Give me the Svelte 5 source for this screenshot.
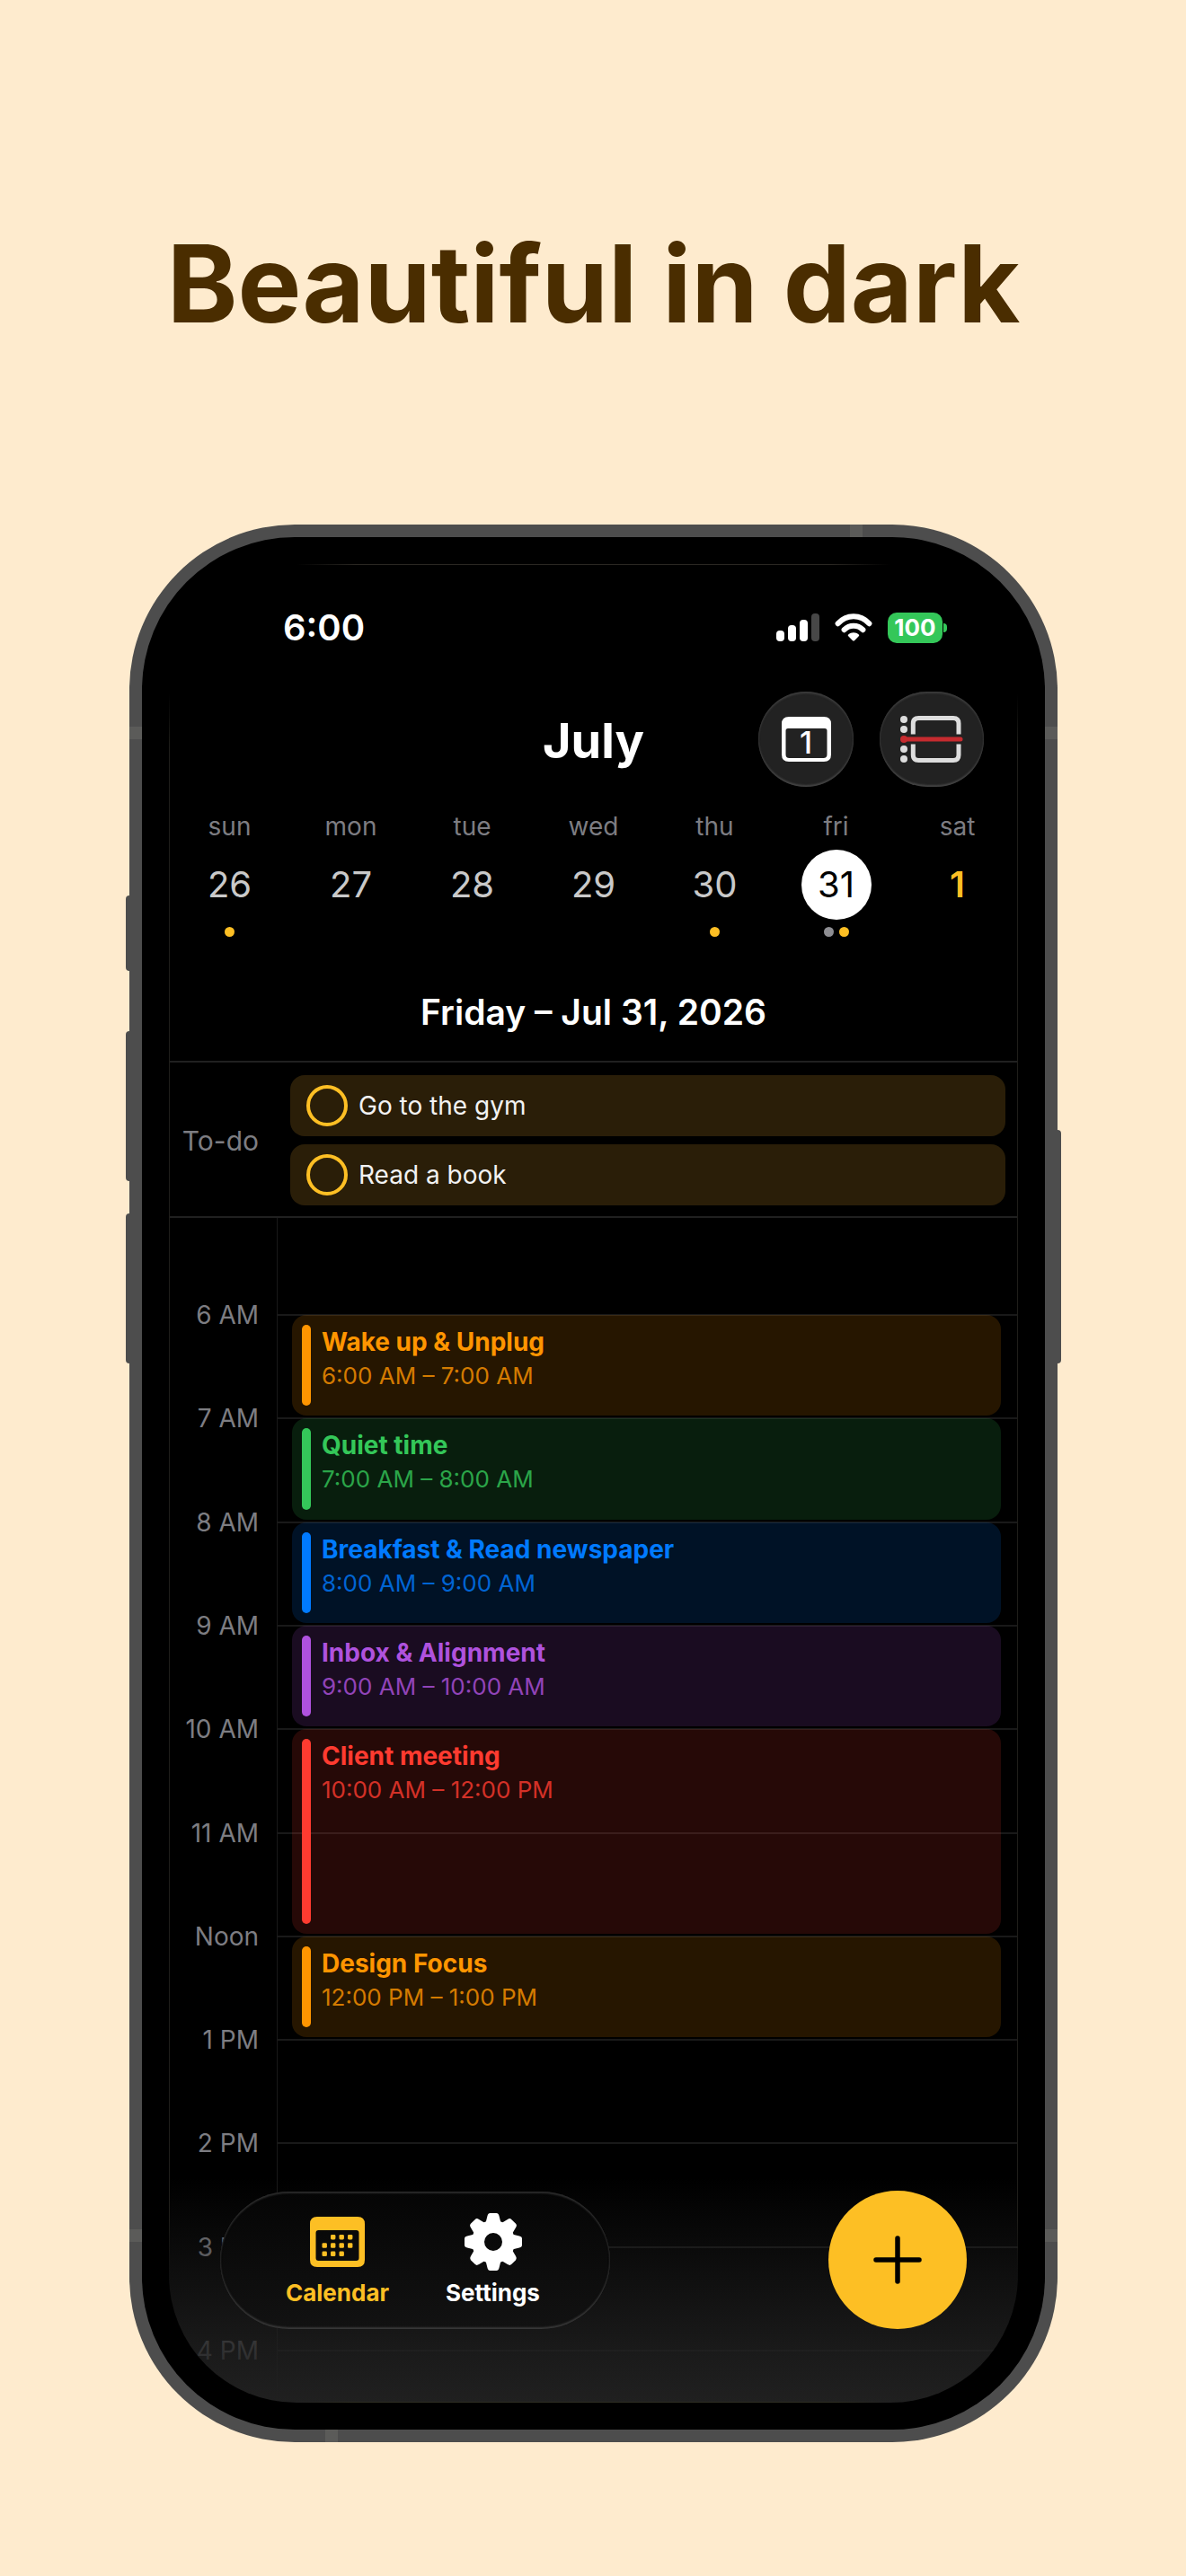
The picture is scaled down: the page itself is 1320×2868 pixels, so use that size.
<script lang="ts">
  type Day = { name: string; date: number; dots?: string[]; selected?: boolean; accent?: boolean };
  type CalendarEvent = { title: string; time: string; start: number; hours: number; color: string };

  const DAYS: Day[] = [
    { name: "sun", date: 26, dots: ["#fdbf24"] },
    { name: "mon", date: 27 },
    { name: "tue", date: 28 },
    { name: "wed", date: 29 },
    { name: "thu", date: 30, dots: ["#fdbf24"] },
    { name: "fri", date: 31, dots: ["#8e8e93", "#fdbf24"], selected: true },
    { name: "sat", date: 1, accent: true },
  ];

  const HOURS = [
    "6 AM",
    "7 AM",
    "8 AM",
    "9 AM",
    "10 AM",
    "11 AM",
    "Noon",
    "1 PM",
    "2 PM",
    "3 PM",
    "4 PM",
  ];

  // start is the hour of the day, the timeline opens at 6
  const EVENTS: CalendarEvent[] = [
    { title: "Wake up & Unplug", time: "6:00 AM – 7:00 AM", start: 6, hours: 1, color: "#ff9500" },
    { title: "Quiet time", time: "7:00 AM – 8:00 AM", start: 7, hours: 1, color: "#34c759" },
    { title: "Breakfast & Read newspaper", time: "8:00 AM – 9:00 AM", start: 8, hours: 1, color: "#007aff" },
    { title: "Inbox & Alignment", time: "9:00 AM – 10:00 AM", start: 9, hours: 1, color: "#af52de" },
    { title: "Client meeting", time: "10:00 AM – 12:00 PM", start: 10, hours: 2, color: "#ff3b30" },
    { title: "Design Focus", time: "12:00 PM – 1:00 PM", start: 12, hours: 1, color: "#ff9500" },
  ];

  const GEAR_TEETH = [0, 45, 90, 135, 180, 225, 270, 315];

  // [column, row] of every filled day in the tab icon
  const ICON_DAYS = [
    [1, 0], [2, 0], [3, 0],
    [0, 1], [1, 1], [2, 1], [3, 1],
    [0, 2], [1, 2], [2, 2],
  ];

  let todos = $state([
    { id: "gym", text: "Go to the gym", done: false },
    { id: "book", text: "Read a book", done: false },
  ]);
</script>

<main class="page">
  <h1 class="headline">Beautiful in dark</h1>

  <div class="phone">
    <span class="key key-action"></span>
    <span class="key key-up"></span>
    <span class="key key-down"></span>
    <span class="key key-power"></span>
    <span class="band band-top"></span>
    <span class="band band-bottom"></span>
    <span class="band band-side band-upper"></span>
    <span class="band band-side band-lower"></span>

    <div class="bezel">
      <div class="screen">
        <div class="status">
          <span class="clock">6:00</span>
          <div class="status-icons">
            <svg width="48" height="31" viewBox="0 0 48 31" aria-hidden="true">
              <rect x="0" y="19" width="9" height="12" rx="4" fill="#fff" />
              <rect x="13" y="13" width="9" height="18" rx="4" fill="#fff" />
              <rect x="26" y="7" width="9" height="24" rx="4" fill="#fff" />
              <rect x="39" y="0" width="9" height="31" rx="4" fill="#474747" />
            </svg>
            <svg width="42" height="31" viewBox="0 0 42 31" aria-hidden="true">
              <g fill="none" stroke="#fff" stroke-width="6" stroke-linecap="round">
                <path d="M3.6 11.2C13.3 0.6 28.7 0.6 38.4 11.2" />
                <path d="M10.6 18.2C16.5 12.4 25.5 12.4 31.4 18.2" />
              </g>
              <path
                d="M15.2 23.4C18.4 20.4 23.6 20.4 26.8 23.4C27.4 24 27.4 24.6 26.8 25.2L22.2 29.9C21.4 30.7 20.6 30.7 19.8 29.9L15.2 25.2C14.6 24.6 14.6 24 15.2 23.4Z"
                fill="#fff"
              />
            </svg>
            <div class="battery"><span>100</span></div>
          </div>
        </div>

        <header class="topbar">
          <h2 class="month">July</h2>
          <div class="actions">
            <button class="round-btn" aria-label="Today">
              <svg width="55" height="50" viewBox="0 0 55 50" aria-hidden="true">
                <path
                  fill="#fff"
                  fill-rule="evenodd"
                  d="M8 0H47Q55 0 55 8V42Q55 50 47 50H8Q0 50 0 42V8Q0 0 8 0ZM7 13Q4.500 13 4.500 15.500V42Q4.500 46 8.500 46H46.500Q50.500 46 50.500 42V15.500Q50.500 13 48 13Z"
                />
                <text class="icon-day" x="27" y="41" text-anchor="middle">1</text>
              </svg>
            </button>
            <button class="round-btn wide" aria-label="Jump to now">
              <svg width="70" height="52" viewBox="0 0 70 52" aria-hidden="true">
                <g fill="#ddd">
                  <circle cx="4" cy="4" r="4" />
                  <circle cx="4" cy="15" r="4" />
                  <circle cx="4" cy="37" r="4" />
                  <circle cx="4" cy="48" r="4" />
                </g>
                <g fill="none" stroke="#ddd" stroke-width="5">
                  <path d="M14.300 20.500V8.500Q14.300 2.500 20.300 2.500H59Q65 2.500 65 8.500V20.500" />
                  <path d="M14.300 31.500V43.500Q14.300 49.500 20.300 49.500H59Q65 49.500 65 43.500V31.500" />
                </g>
                <path d="M4 26H67" stroke="#c62b2f" stroke-width="5" stroke-linecap="round" />
                <circle cx="4" cy="26" r="4" fill="#c62b2f" />
              </svg>
            </button>
          </div>
        </header>

        <div class="week">
          {#each DAYS as day (day.name)}
            <button class="day" class:selected={day.selected} class:accent={day.accent}>
              <span class="day-name">{day.name}</span>
              <span class="day-date">{day.date}</span>
              <span class="day-dots">
                {#each day.dots ?? [] as dot}
                  <i style:background={dot}></i>
                {/each}
              </span>
            </button>
          {/each}
        </div>

        <h3 class="date-title">Friday – Jul 31, 2026</h3>

        <section class="todo">
          <span class="todo-label">To-do</span>
          <div class="todo-list">
            {#each todos as todo (todo.id)}
              <label class="todo-item" for={todo.id}>
                <input id={todo.id} type="checkbox" bind:checked={todo.done} />
                <span>{todo.text}</span>
              </label>
            {/each}
          </div>
        </section>

        <section class="timeline">
          <div class="slot first" style:grid-row={1}></div>
          {#each HOURS as hour, i (hour)}
            <span class="hour" style:grid-row={i + 2}>{hour}</span>
            <div class="slot" style:grid-row={i + 2}></div>
          {/each}
          {#each EVENTS as event (event.title)}
            <article
              class="event"
              style:--color={event.color}
              style:grid-row="{event.start - 4} / span {event.hours}"
            >
              <span class="event-bar"></span>
              <div class="event-text">
                <h4>{event.title}</h4>
                <p>{event.time}</p>
              </div>
            </article>
          {/each}
        </section>

        <div class="fade"></div>

        <div class="bottom">
          <nav class="tabs">
            <a class="tab active" href="#calendar">
              <svg width="61" height="64" viewBox="0 -4 61 64" aria-hidden="true">
                <path
                  fill="currentColor"
                  fill-rule="evenodd"
                  d="M8 0H53Q61 0 61 8V48Q61 56 53 56H8Q0 56 0 48V8Q0 0 8 0ZM9.500 15Q6.500 15 6.500 18V46Q6.500 49 9.500 49H51.500Q54.500 49 54.500 46V18Q54.500 15 51.500 15Z"
                />
                {#each ICON_DAYS as [col, row]}
                  <rect
                    x={13.5 + col * 9.5}
                    y={20 + row * 9.3}
                    width="5.400"
                    height="5.400"
                    rx="1.300"
                    fill="currentColor"
                  />
                {/each}
              </svg>
              <span>Calendar</span>
            </a>
            <a class="tab" href="#settings">
              <svg width="66" height="64" viewBox="-33 -32 66 64" aria-hidden="true">
                <path
                  fill="currentColor"
                  fill-rule="evenodd"
                  d="M-24 0A24 24 0 1 1 24 0A24 24 0 1 1 -24 0ZM-10 0A10 10 0 1 0 10 0A10 10 0 1 0 -10 0Z"
                />
                {#each GEAR_TEETH as angle}
                  <path
                    fill="currentColor"
                    transform="rotate({angle})"
                    d="M-8.500 -21L-6.500 -29Q-5.800 -32 -3.500 -32H3.500Q5.800 -32 6.500 -29L8.500 -21Z"
                  />
                {/each}
              </svg>
              <span>Settings</span>
            </a>
          </nav>
          <button class="fab" aria-label="Add event">
            <svg width="54" height="54" viewBox="0 0 54 54" aria-hidden="true">
              <path d="M27 3V51M3 27H51" stroke="#000" stroke-width="5.500" stroke-linecap="round" />
            </svg>
          </button>
        </div>
      </div>
    </div>
  </div>
</main>

<style>
  :global(body) {
    background: #feebce;
  }

  .page {
    box-sizing: border-box;
    min-height: 100vh;
    padding: 236px 143px 150px 144px;
    background: #feebce;
    font-family: Inter, "Liberation Sans", sans-serif;
  }

  h1,
  h2,
  h3,
  h4,
  p {
    margin: 0;
  }

  button {
    padding: 0;
    border: 0;
    background: none;
    font: inherit;
    color: inherit;
  }

  svg {
    display: block;
  }

  .headline {
    margin-bottom: 188px;
    font-size: 119px;
    line-height: 160px;
    font-weight: 700;
    text-align: center;
    white-space: nowrap;
    color: #4a2d00;
  }

  .phone {
    position: relative;
    padding: 14px;
    border-radius: 184px;
    background: #4d4d4d;
  }

  .key {
    position: absolute;
    left: -4px;
    width: 8px;
    border-radius: 4px 0 0 4px;
    background: #4d4d4d;
  }

  .key-action {
    top: 413px;
    height: 84px;
  }

  .key-up {
    top: 564px;
    height: 167px;
  }

  .key-down {
    top: 767px;
    height: 167px;
  }

  .key-power {
    top: 674px;
    left: auto;
    right: -4px;
    height: 260px;
    border-radius: 0 4px 4px 0;
  }

  .band {
    position: absolute;
    width: 14px;
    height: 14px;
    background: #5b5b59;
  }

  .band-top {
    top: 0;
    right: 217px;
  }

  .band-bottom {
    bottom: 0;
    left: 218px;
  }

  .band-side {
    left: 0;
    width: 100%;
  }

  .band-upper {
    top: 225px;
  }

  .band-lower {
    bottom: 223px;
  }

  .bezel {
    position: relative;
    padding: 30px;
    border-radius: 170px;
    background: #000;
  }

  .screen {
    position: relative;
    overflow: hidden;
    border-radius: 142px;
    background: #000;
    color: #fff;
  }

  .screen::after {
    content: "";
    position: absolute;
    inset: 0;
    pointer-events: none;
    background:
      linear-gradient(90deg, transparent 15%, #2a2722 22%, #2a2722 78%, transparent 85%) top / 100% 1px no-repeat,
      linear-gradient(90deg, transparent 15%, #2e2e22 22%, #2e2e22 78%, transparent 85%) bottom / 100% 1px no-repeat,
      linear-gradient(transparent 7%, #1f1e1a 10%, #1f1e1a 90%, transparent 93%) left / 1px 100% no-repeat,
      linear-gradient(transparent 7%, #1f1e1a 10%, #1f1e1a 90%, transparent 93%) right / 1px 100% no-repeat;
  }

  .status {
    display: flex;
    align-items: center;
    justify-content: space-between;
    height: 141px;
    padding: 0 78px 0 127px;
  }

  .clock {
    font-size: 40px;
    font-weight: 600;
  }

  .status-icons {
    display: flex;
    align-items: center;
    gap: 17px;
  }

  .battery {
    position: relative;
    display: flex;
    align-items: center;
    justify-content: center;
    width: 61px;
    height: 34px;
    margin-right: 6px;
    border-radius: 10px;
    background: #34c759;
    font-size: 26px;
    font-weight: 700;
  }

  .battery::after {
    content: "";
    position: absolute;
    top: 12px;
    right: -5px;
    width: 4px;
    height: 10px;
    border-radius: 0 5px 5px 0;
    background: #34c759;
  }

  .topbar {
    display: grid;
    grid-template-columns: 1fr auto 1fr;
    align-items: center;
    height: 108px;
    padding: 0 38px;
  }

  .month {
    grid-column: 2;
    padding-top: 4px;
    font-size: 54px;
    line-height: 72px;
    font-weight: 700;
  }

  .actions {
    display: flex;
    justify-content: flex-end;
    gap: 29px;
  }

  .round-btn {
    display: grid;
    place-items: center;
    flex: none;
    width: 106px;
    height: 106px;
    border-radius: 58px;
    background: #222;
    box-shadow:
      inset 0 2px 2px #3c3c3c,
      inset 0 -2px 2px #444;
  }

  .round-btn.wide {
    width: 116px;
  }

  .icon-day {
    font-size: 34px;
    font-weight: 500;
    fill: #fff;
  }

  .week {
    display: flex;
    margin-top: 25px;
  }

  .day {
    display: flex;
    flex: 1;
    flex-direction: column;
    align-items: center;
  }

  .day-name {
    font-size: 28px;
    line-height: 36px;
    color: #7d7d82;
  }

  .day-date {
    width: 78px;
    margin: 8px 0;
    border-radius: 50%;
    font-size: 40px;
    line-height: 78px;
    color: #c9c9c9;
  }

  .selected .day-date {
    background: #fff;
    color: #000;
  }

  .accent .day-date {
    font-weight: 600;
    color: #fdbf24;
  }

  .day-dots {
    display: flex;
    gap: 6px;
    height: 11px;
  }

  .day-dots i {
    width: 11px;
    border-radius: 50%;
  }

  .date-title {
    padding: 59px 0 29px;
    border-bottom: 2px solid #202020;
    font-size: 39px;
    line-height: 50px;
    font-weight: 600;
    text-align: center;
  }

  .todo {
    display: grid;
    grid-template-columns: 120px 1fr;
    align-items: center;
    padding: 14px 14px 12px 0;
    border-bottom: 2px solid #202020;
  }

  .todo-label,
  .hour {
    padding-right: 20px;
    font-size: 28px;
    line-height: 36px;
    text-align: right;
    color: #7d7d82;
  }

  .todo-label {
    font-size: 30px;
  }

  .todo-list {
    display: flex;
    flex-direction: column;
    gap: 9px;
    padding-left: 15px;
  }

  .todo-item {
    display: flex;
    align-items: center;
    gap: 12px;
    height: 68px;
    padding-left: 18px;
    border-radius: 16px;
    background: #2a1e08;
    font-size: 28px;
    color: #f2f2f2;
  }

  .todo-item input {
    appearance: none;
    box-sizing: border-box;
    width: 46px;
    height: 46px;
    margin: 0;
    border: 4px solid #fdbf24;
    border-radius: 50%;
  }

  .todo-item input:checked {
    background: #fdbf24;
  }

  .timeline {
    display: grid;
    grid-template-columns: 120px 1fr;
    grid-template-rows: 107px repeat(10, 1fr) 59px;
    height: 1319px;
  }

  .hour {
    grid-column: 1;
    margin-top: -17px;
  }

  .slot {
    grid-column: 2;
    border-top: 2px solid #191919;
    border-left: 1px solid #191919;
  }

  .slot.first {
    border-top: 0;
  }

  .event {
    display: flex;
    grid-column: 2;
    gap: 12px;
    margin: 1px 19px 2px 17px;
    padding: 11px;
    border-radius: 16px;
    background: color-mix(in srgb, var(--color) 15%, transparent);
    color: var(--color);
  }

  .event-bar {
    width: 10px;
    border-radius: 5px;
    background: var(--color);
  }

  .event h4 {
    font-size: 28px;
    line-height: 38px;
    font-weight: 700;
  }

  .event p {
    font-size: 26px;
    line-height: 38px;
    opacity: 0.8;
  }

  .fade {
    position: absolute;
    inset: auto 0 0;
    height: 250px;
    background: linear-gradient(rgba(32, 32, 32, 0), rgba(32, 32, 32, 0.8) 75%, #202020);
  }

  .bottom {
    position: absolute;
    inset: auto 57px 82px;
    display: flex;
    align-items: center;
    justify-content: space-between;
  }

  .tabs {
    display: flex;
    padding: 0 44px;
    border-radius: 77px;
    background: linear-gradient(#050505, #121212);
    box-shadow:
      inset 0 2px 2px #2c2c2c,
      inset 0 -2px 2px #383838,
      inset 0 0 2px #222;
  }

  .tab {
    display: flex;
    flex-direction: column;
    align-items: center;
    gap: 7px;
    width: 173px;
    padding: 24px 0 22px;
    font-size: 26px;
    line-height: 36px;
    font-weight: 700;
    text-decoration: none;
    color: #fff;
  }

  .tab.active {
    color: #fdbf24;
  }

  .fab {
    display: grid;
    place-items: center;
    width: 154px;
    height: 154px;
    border-radius: 50%;
    background: #fdbf24;
  }
</style>
